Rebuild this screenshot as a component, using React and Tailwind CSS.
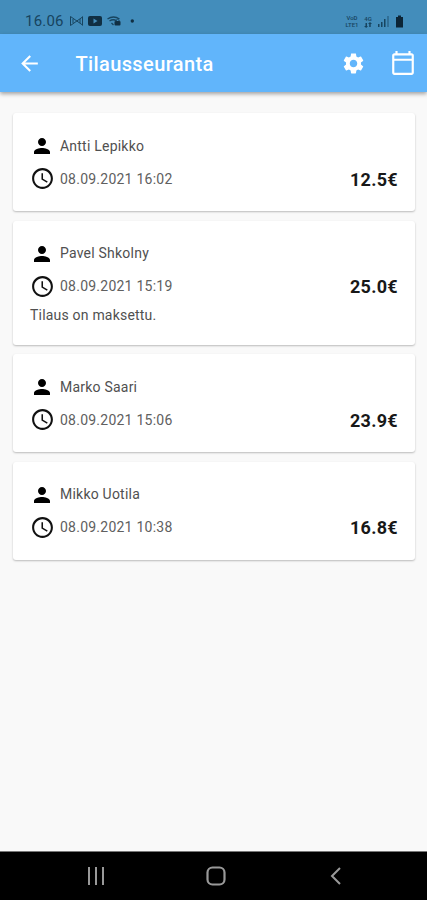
import React from 'react'

const orders = [
    { name: 'Antti Lepikko', time: '08.09.2021 16:02', price: '12.5€' },
    { name: 'Pavel Shkolny', time: '08.09.2021 15:19', price: '25.0€', note: 'Tilaus on maksettu.' },
    { name: 'Marko Saari', time: '08.09.2021 15:06', price: '23.9€' },
    { name: 'Mikko Uotila', time: '08.09.2021 10:38', price: '16.8€' },
]

function Icon({ d, size = 24, className = '' }) {
    return (
        <svg width={size} height={size} viewBox="0 0 24 24" fill="currentColor" className={`shrink-0 ${className}`}>
            <path d={d} />
        </svg>
    )
}

const icons = {
    back: 'M20 11H7.83l5.59-5.59L12 4l-8 8 8 8 1.41-1.41L7.83 13H20v-2z',
    gear: 'M19.14 12.94c.04-.3.06-.61.06-.94 0-.32-.02-.64-.07-.94l2.03-1.58c.18-.14.23-.41.12-.61l-1.92-3.32c-.12-.22-.37-.29-.59-.22l-2.39.96c-.5-.38-1.03-.7-1.62-.94l-.36-2.54c-.04-.24-.24-.41-.48-.41h-3.84c-.24 0-.43.17-.47.41l-.36 2.54c-.59.24-1.13.57-1.62.94l-2.39-.96c-.22-.08-.47 0-.59.22L2.74 8.87c-.12.21-.08.47.12.61l2.03 1.58c-.05.3-.09.63-.09.94s.02.64.07.94l-2.03 1.58c-.18.14-.23.41-.12.61l1.92 3.32c.12.22.37.29.59.22l2.39-.96c.5.38 1.03.7 1.62.94l.36 2.54c.05.24.24.41.48.41h3.84c.24 0 .44-.17.47-.41l.36-2.54c.59-.24 1.13-.56 1.62-.94l2.39.96c.22.08.47 0 .59-.22l1.92-3.32c.12-.22.07-.47-.12-.61l-2.01-1.58zM12 15.6c-1.98 0-3.6-1.62-3.6-3.6s1.62-3.6 3.6-3.6 3.6 1.62 3.6 3.6-1.62 3.6-3.6 3.6z',
    calendar: 'M20 3h-1V1h-2v2H7V1H5v2H4c-1.1 0-2 .9-2 2v16c0 1.1.9 2 2 2h16c1.1 0 2-.9 2-2V5c0-1.1-.9-2-2-2zm0 18H4V10h16v11zm0-13H4V5h16v3z',
    person: 'M12 12c2.21 0 4-1.79 4-4s-1.79-4-4-4-4 1.79-4 4 1.79 4 4 4zm0 2c-2.67 0-8 1.34-8 4v2h16v-2c0-2.66-5.33-4-8-4z',
    clock: 'M11.99 2C6.47 2 2 6.48 2 12s4.47 10 9.99 10C17.52 22 22 17.52 22 12S17.52 2 11.99 2zM12 20c-4.42 0-8-3.58-8-8s3.58-8 8-8 8 3.58 8 8-3.58 8-8 8zm.5-13H11v6l5.25 3.15.75-1.23-4.5-2.67z',
}

function StatusBar() {
    return (
        <div className="flex h-[34px] items-center bg-[#438dbb] pt-[8px] pl-[25px] pr-[23px] text-[#17445f]">
            <span className="text-[15px] leading-none tracking-[0.2px]">16.06</span>
            <svg width="68" height="12" viewBox="0 0 68 12" className="ml-[5px]" fill="none" stroke="currentColor">
                <path d="M1.5 1.5v9M1.5 1.5l12 8.5M1.5 10.5l12-8.5M13.5 1.5v9M4 4v4M11 4v4" strokeWidth="1" />
                <rect x="19" y="1" width="14" height="10" rx="2" fill="#102f43" stroke="none" />
                <path d="M24.5 3.5v5l4-2.5z" fill="#438dbb" stroke="none" />
                <path d="M38.5 4q6-4 12 0M40.5 6q4-2.5 7 0M42.5 8l2 2" strokeWidth="1.3" />
                <rect x="45.5" y="6" width="6" height="4.5" rx="1" fill="#102f43" stroke="none" />
                <path d="M46.7 6.5v-1q1.8-2.5 3.6 0v1" strokeWidth="1" />
                <circle cx="63.3" cy="6" r="1.7" fill="#102f43" stroke="none" />
            </svg>
            <div className="ml-auto flex items-center">
                <div className="w-[16px] text-center text-[6px] font-medium leading-[7px]">
                    <div>VoD</div>
                    <div>LTE1</div>
                </div>
                <div className="ml-[3px] flex w-[10px] flex-col items-center text-[6px] font-medium leading-[7px]">
                    <div>4G</div>
                    <svg width="8" height="6" viewBox="0 0 8 6" fill="currentColor">
                        <path d="M0 4h1.5V1h1.5v3h1L2.2 6zM4 2l2-2 2 2H6.7v3H5.2V2z" />
                    </svg>
                </div>
                <svg width="13" height="12" viewBox="0 0 13 12" className="ml-[4px]" fill="currentColor">
                    <path d="M1 9h1.5v3H1zM4 7h1.5v5H4zM7 4h1.5v8H7z" />
                    <path d="M10 1h2v11h-2z" opacity="0.4" />
                </svg>
                <svg width="9" height="13" viewBox="0 0 9 13" className="ml-[5px]" fill="#0c2536">
                    <path d="M3 .5h3V2h2v10.5H1V2h2z" />
                </svg>
            </div>
        </div>
    )
}

function OrderCard({ order }) {
    return (
        <div className="rounded-[3px] bg-white pt-[21px] pl-[17px] pr-[17px] pb-[20px] shadow-[0_1px_2px_rgba(0,0,0,0.25)]">
            <div className="flex h-6 items-center">
                <Icon d={icons.person} className="text-black" />
                <span className="ml-[6px] text-[14px] tracking-[0.22px] text-[#505050]">{order.name}</span>
            </div>
            <div className="mt-[8px] flex h-[25px] items-center">
                <Icon d={icons.clock} size={25} className="-ml-[0.5px] text-[#111]" />
                <span className="ml-[5.5px] pt-px text-[14px] tracking-[0.24px] text-[#606060]">{order.time}</span>
                <span className="ml-auto pt-px text-[18px] font-bold tracking-[0.3px] text-[#181818]">{order.price}</span>
            </div>
            {order.note && <p className="mt-[6px] h-5 text-[14px] leading-5 tracking-[0.2px] text-[#505050]">{order.note}</p>}
        </div>
    )
}

export default function App() {
    return (
        <div className="flex h-[900px] w-[427px] flex-col overflow-hidden bg-[#f9f9f9] font-['Roboto',sans-serif]">
            <StatusBar />
            <header className="flex h-[58px] shrink-0 items-center bg-[#61b5fb] pl-[17px] pr-[11px] text-white shadow-[0_2px_4px_rgba(0,0,0,0.35)]">
                <Icon d={icons.back} size={25} />
                <h1 className="ml-[33.5px] pt-px text-[20px] font-medium tracking-[0.38px]">Tilausseuranta</h1>
                <Icon d={icons.gear} size={25} className="ml-auto" />
                <Icon d={icons.calendar} size={26} className="ml-[24.5px]" />
            </header>
            <main className="flex flex-1 flex-col gap-[9.6px] pt-[21px] pl-[13px] pr-3">
                {orders.map(o => <OrderCard key={o.time} order={o} />)}
            </main>
            <nav className="flex h-[49px] shrink-0 items-center border-t border-[#777] bg-black text-[#999]">
                <svg width="18" height="18" viewBox="0 0 18 18" className="ml-[87px]" fill="currentColor">
                    <path d="M1 0h2v18H1zM8 0h2v18H8zM15 0h2v18h-2z" />
                </svg>
                <svg width="20" height="20" viewBox="0 0 20 20" className="ml-[101px]" fill="none" stroke="currentColor" strokeWidth="2.2">
                    <rect x="1.5" y="1.5" width="17" height="17" rx="5" />
                </svg>
                <svg width="12" height="18" viewBox="0 0 12 18" className="ml-[104px]" fill="none" stroke="currentColor" strokeWidth="2">
                    <path d="M10 1L2 9l8 8" />
                </svg>
            </nav>
        </div>
    )
}
